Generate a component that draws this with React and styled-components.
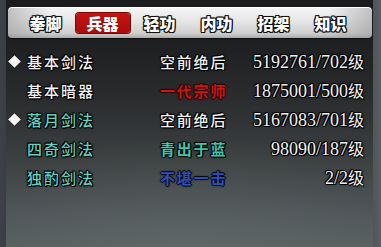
import React from "react";
import styled, { createGlobalStyle } from "styled-components";

const Global = createGlobalStyle`
  html, body { margin: 0; padding: 0; background: #2a2c30; }
  * { box-sizing: border-box; }
`;

const Frame = styled.div`
  width: 381px;
  height: 247px;
  display: flex;
  background: linear-gradient(90deg, #3e4148 0px, #3a3d44 6px, transparent 6px, transparent 373px, #50545b 373px, #5b5f66 381px),
    linear-gradient(180deg, #1f2022 0%, #3c3f45 100%);
  padding: 0 8px 0 6px;
  overflow: hidden;
`;

const Panel = styled.div`
  flex: 1;
  display: flex;
  flex-direction: column;
  background:
    radial-gradient(ellipse 60% 50% at 50% 105%, rgba(110, 120, 118, 0.35), rgba(110, 120, 118, 0) 100%),
    linear-gradient(180deg, #1b1b1d 0%, #1f2022 18%, #2a2c2e 40%, #3d4142 65%, #50575a 88%, #58605f 100%);
  padding: 7px 1px 0 2px;
`;

const TabBar = styled.div`
  height: 31px;
  display: flex;
  align-items: center;
  padding-left: 9px;
  border-radius: 4px;
  background:
    linear-gradient(90deg, rgba(150,150,150,0.55) 0%, rgba(255,255,255,0) 12%, rgba(255,255,255,0) 88%, rgba(150,150,150,0.55) 100%),
    linear-gradient(180deg, #f6f6f6 0%, #e6e6e6 45%, #cfcfcf 85%, #a9a9a9 100%);
  box-shadow: inset 0 1px 0 #ffffff, 0 1px 1px rgba(0, 0, 0, 0.6);
`;

const Tab = styled.div`
  width: 57px;
  height: 20px;
  display: flex;
  align-items: center;
  justify-content: center;
  font-family: "Noto Sans CJK SC", sans-serif;
  font-weight: 900;
  font-size: 16px;
  line-height: 20px;
  color: #ffffff;
  border-radius: 3px;
  background: ${(p) => (p.$active ? "linear-gradient(180deg, #c41414 0%, #a80c0c 100%)" : "transparent")};
  box-shadow: ${(p) => (p.$active ? "0 0 0 1px #7a0606" : "none")};
  text-shadow: ${(p) =>
    p.$active
      ? "0 0 1px #400"
      : "1px 0 0 #111, -1px 0 0 #111, 0 1px 0 #111, 0 -1px 0 #111, 1px 1px 0 #111, -1px -1px 0 #111, 1px -1px 0 #111, -1px 1px 0 #111, 0 0 2px #000"};
`;

const ActiveWrap = styled.div`
  width: 57px;
  display: flex;
  justify-content: center;
  & > ${Tab} {
    width: 54px;
  }
`;

const List = styled.div`
  display: flex;
  flex-direction: column;
  margin-top: 9px;
`;

const Row = styled.div`
  height: 29px;
  display: grid;
  grid-template-columns: 19px 133px 1fr;
  align-items: center;
  padding-right: 8px;
`;

const Marker = styled.div`
  width: 9px;
  height: 9px;
  margin-left: 2px;
  background: ${(p) => (p.$show ? "#f4f4f4" : "transparent")};
  transform: rotate(45deg);
  box-shadow: ${(p) => (p.$show ? "0 0 1px #000" : "none")};
`;

const outline =
  "1px 0 0 #000, -1px 0 0 #000, 0 1px 0 #000, 0 -1px 0 #000, 1px 1px 0 #000, -1px -1px 0 #000, 0 0 3px #000";

const Name = styled.div`
  font-family: "Noto Sans CJK SC", sans-serif;
  font-size: 15px;
  font-weight: 500;
  line-height: 20px;
  letter-spacing: 2px;
  color: ${(p) => p.$color};
  text-shadow: ${outline};
`;

const Rank = styled.div`
  font-family: "Noto Sans CJK SC", sans-serif;
  font-size: 15px;
  line-height: 20px;
  letter-spacing: 1.8px;
  font-weight: ${(p) => (p.$bold ? 700 : 500)};
  color: ${(p) => p.$color};
  text-shadow: ${(p) => p.$glow || outline};
`;

const Level = styled.div`
  justify-self: end;
  font-family: "Liberation Serif", serif;
  font-size: 18px;
  line-height: 20px;
  color: #f2f2f2;
  text-shadow: ${outline};
  display: flex;
  align-items: baseline;
`;

const Unit = styled.span`
  font-family: "Noto Sans CJK SC", sans-serif;
  font-size: 16px;
`;

const MidCell = styled.div`
  display: grid;
  grid-template-columns: 1fr auto;
  align-items: center;
`;

const tabs = ["拳脚", "兵器", "轻功", "内功", "招架", "知识"];

const rows = [
  { mark: true, name: "基本剑法", nameColor: "#f2f2f2", rank: "空前绝后", rankColor: "#f2f2f2", lv: "5192761/702" },
  {
    mark: false,
    name: "基本暗器",
    nameColor: "#f2f2f2",
    rank: "一代宗师",
    rankColor: "#c31a1a",
    bold: true,
    glow: "1px 0 0 #2a0000, -1px 0 0 #2a0000, 0 1px 0 #2a0000, 0 -1px 0 #2a0000, 0 0 3px #5a0000",
    lv: "1875001/500",
  },
  { mark: true, name: "落月剑法", nameColor: "#63d2c3", rank: "空前绝后", rankColor: "#f2f2f2", lv: "5167083/701" },
  { mark: false, name: "四奇剑法", nameColor: "#63d2c3", rank: "青出于蓝", rankColor: "#3fc7ad", bold: true, lv: "98090/187" },
  {
    mark: false,
    name: "独酌剑法",
    nameColor: "#63d2c3",
    rank: "不堪一击",
    rankColor: "#2f4fb4",
    bold: true,
    glow: "1px 0 0 #000814, -1px 0 0 #000814, 0 1px 0 #000814, 0 -1px 0 #000814, 0 0 3px #001030",
    lv: "2/2",
  },
];

export default function App() {
  return (
    <>
      <Global />
      <Frame>
        <Panel>
          <TabBar>
            {tabs.map((t, i) =>
              i === 1 ? (
                <ActiveWrap key={t}>
                  <Tab $active>{t}</Tab>
                </ActiveWrap>
              ) : (
                <Tab key={t}>{t}</Tab>
              )
            )}
          </TabBar>
          <List>
            {rows.map((r) => (
              <Row key={r.name}>
                <Marker $show={r.mark} />
                <Name $color={r.nameColor}>{r.name}</Name>
                <MidCell>
                  <Rank $color={r.rankColor} $bold={r.bold} $glow={r.glow}>
                    {r.rank}
                  </Rank>
                  <Level>
                    {r.lv}
                    <Unit>级</Unit>
                  </Level>
                </MidCell>
              </Row>
            ))}
          </List>
        </Panel>
      </Frame>
    </>
  );
}
